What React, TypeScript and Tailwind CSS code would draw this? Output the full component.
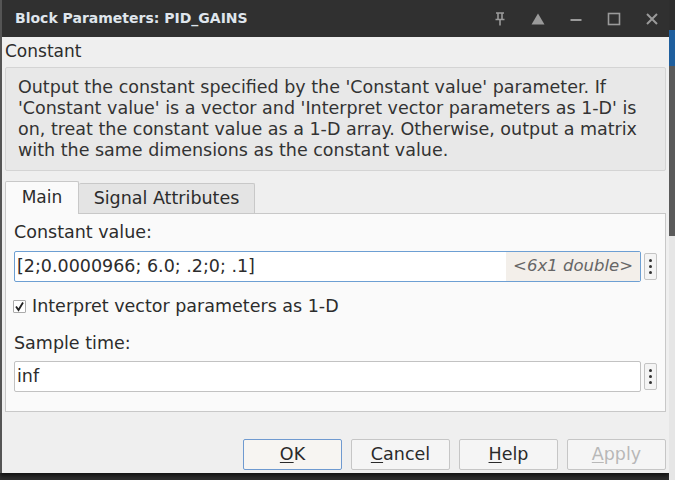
import { useState } from 'react';

const DotsButton = () => (
    <button className="ml-[3px] flex h-[27px] w-[13px] flex-col items-center justify-center gap-[3px] rounded-[2px] border border-[#c4c4c4] bg-[#f4f4f4]">
        <span className="h-[3px] w-[3px] rounded-full bg-[#333]" />
        <span className="h-[3px] w-[3px] rounded-full bg-[#333]" />
        <span className="h-[3px] w-[3px] rounded-full bg-[#333]" />
    </button>
);

const DialogButton = ({ label, mnemonic, focused, disabled }: { label: string; mnemonic: number; focused?: boolean; disabled?: boolean }) => (
    <button
        className={`flex h-[31px] w-[99px] items-center justify-center rounded-[2px] border font-['DejaVu_Sans',sans-serif] text-[17.5px] ${
            focused ? 'border-[#6f9ad0] bg-[#f7f5f2]' : 'border-[#c6c6c6] bg-[#f5f5f5]'
        } ${disabled ? 'text-[#b8b8b8]' : 'text-[#2a2a2a]'}`}
    >
        {label.slice(0, mnemonic)}
        <span className="underline underline-offset-2">{label[mnemonic]}</span>
        {label.slice(mnemonic + 1)}
    </button>
);

const TitleIcons = () => (
    <div className="flex items-center gap-[22px] pr-[9px] text-[#9a9a9a]">
        <svg width="16" height="16" viewBox="0 0 16 16" fill="none" stroke="currentColor" strokeWidth="1.6">
            <path d="M4 2h8M6 2v6M10 2v6M3.5 8.5h9M8 8.5v6" />
        </svg>
        <svg width="16" height="16" viewBox="0 0 16 16" fill="currentColor">
            <path d="M8 2.5L14.5 13.5H1.5Z" />
        </svg>
        <svg width="16" height="16" viewBox="0 0 16 16" fill="none" stroke="currentColor" strokeWidth="2">
            <path d="M2.5 9h11" />
        </svg>
        <svg width="16" height="16" viewBox="0 0 16 16" fill="none" stroke="currentColor" strokeWidth="1.6">
            <rect x="2.5" y="2.5" width="11" height="11" />
        </svg>
        <svg width="16" height="16" viewBox="0 0 16 16" fill="none" stroke="currentColor" strokeWidth="2">
            <path d="M3 3l10 10M13 3L3 13" />
        </svg>
    </div>
);

export default function App() {
    const [checked, setChecked] = useState(true);
    return (
        <div className="flex h-[480px] w-[675px] overflow-hidden bg-[#2e2e2e] font-['DejaVu_Sans',sans-serif]">
            <div className="flex flex-col">
                <div className="flex h-[473px] w-[669px] flex-col border-l-2 border-[#555] bg-[#efefef] shadow-[0_3px_4px_rgba(0,0,0,0.6)]">
                    {/* title bar */}
                    <div className="flex h-[37px] shrink-0 items-center justify-between bg-[#303030] pl-[13px]">
                        <span className="text-[14px] font-bold text-[#dfe5ec]">Block Parameters: PID_GAINS</span>
                        <TitleIcons />
                    </div>

                    <div className="flex flex-1 flex-col px-[3px] text-[#2c2c2c]">
                        <div className="pt-[3px] text-[17px] leading-[22px]">Constant</div>

                        <div className="mt-[5px] whitespace-nowrap rounded-[2px] border border-[#d4d4d4] bg-[#e8e8e8] px-[12px] py-[9px] text-[17.5px] leading-[21px] text-[#333]">
                            Output the constant specified by the 'Constant value' parameter. If
                            <br />
                            'Constant value' is a vector and 'Interpret vector parameters as 1-D' is
                            <br />
                            on, treat the constant value as a 1-D array. Otherwise, output a matrix
                            <br />
                            with the same dimensions as the constant value.
                        </div>

                        {/* tabs */}
                        <div className="mt-[10px] flex items-end">
                            <div className="relative z-10 -mb-px flex h-[33px] w-[74px] items-center justify-center rounded-t-[2px] border border-b-0 border-[#c8c8c8] bg-[#fafafa] text-[17px]">
                                Main
                            </div>
                            <div className="flex h-[30px] w-[176px] items-center justify-center rounded-t-[2px] border border-b-0 border-l-0 border-[#c8c8c8] bg-[#e4e4e4] text-[17.5px]">
                                Signal Attributes
                            </div>
                        </div>
                        <div className="flex h-[199px] flex-col border border-[#c8c8c8] bg-[#fafafa] px-[8px]">
                            <div className="pt-[8px] text-[17.5px] leading-[20px]">Constant value:</div>
                            <div className="mt-[9px] flex items-center">
                                <div className="flex h-[31px] flex-1 items-center rounded-[2px] border border-[#6d9fd3] bg-white">
                                    <span className="flex-1 pl-[2px] text-[17.5px]">[2;0.0000966; 6.0; .2;0; .1]</span>
                                    <span className="flex h-full w-[134px] items-center justify-end bg-[#f3efea] pr-[7px] text-[16.5px] italic text-[#666]">
                                        &lt;6x1 double&gt;
                                    </span>
                                </div>
                                <DotsButton />
                            </div>
                            <label className="mt-[13px] flex items-center text-[17.5px] leading-[22px]" onClick={() => setChecked(!checked)}>
                                <span className="-ml-px flex h-[13px] w-[13px] items-center justify-center rounded-[1px] border border-[#aaa] bg-white">
                                    {checked && (
                                        <svg width="11" height="11" viewBox="0 0 11 11" fill="none" stroke="#222" strokeWidth="1.8">
                                            <path d="M2 5.5l2.5 3.5L9 1.5" />
                                        </svg>
                                    )}
                                </span>
                                <span className="ml-[6px]">Interpret vector parameters as 1-D</span>
                            </label>
                            <div className="mt-[16px] text-[17.5px] leading-[20px]">Sample time:</div>
                            <div className="mt-[8px] flex items-center">
                                <div className="flex h-[31px] flex-1 items-center rounded-[2px] border border-[#c2c2c2] bg-white pl-[2px] text-[17.5px]">
                                    inf
                                </div>
                                <DotsButton />
                            </div>
                        </div>

                        {/* buttons */}
                        <div className="mt-[27px] flex justify-end gap-[9px]">
                            <DialogButton label="OK" mnemonic={0} focused />
                            <DialogButton label="Cancel" mnemonic={0} />
                            <DialogButton label="Help" mnemonic={0} />
                            <DialogButton label="Apply" mnemonic={0} disabled />
                        </div>
                    </div>
                </div>
            </div>
            <div className="flex flex-1 flex-col">
                <div className="h-[30px] bg-[#2e2e2e]" />
                <div className="h-[36px] bg-[#1f5f9e]" />
                <div className="h-[170px] bg-[#5a5a5a]" />
                <div className="flex-1 bg-[#e6e6e6]" />
            </div>
        </div>
    );
}
